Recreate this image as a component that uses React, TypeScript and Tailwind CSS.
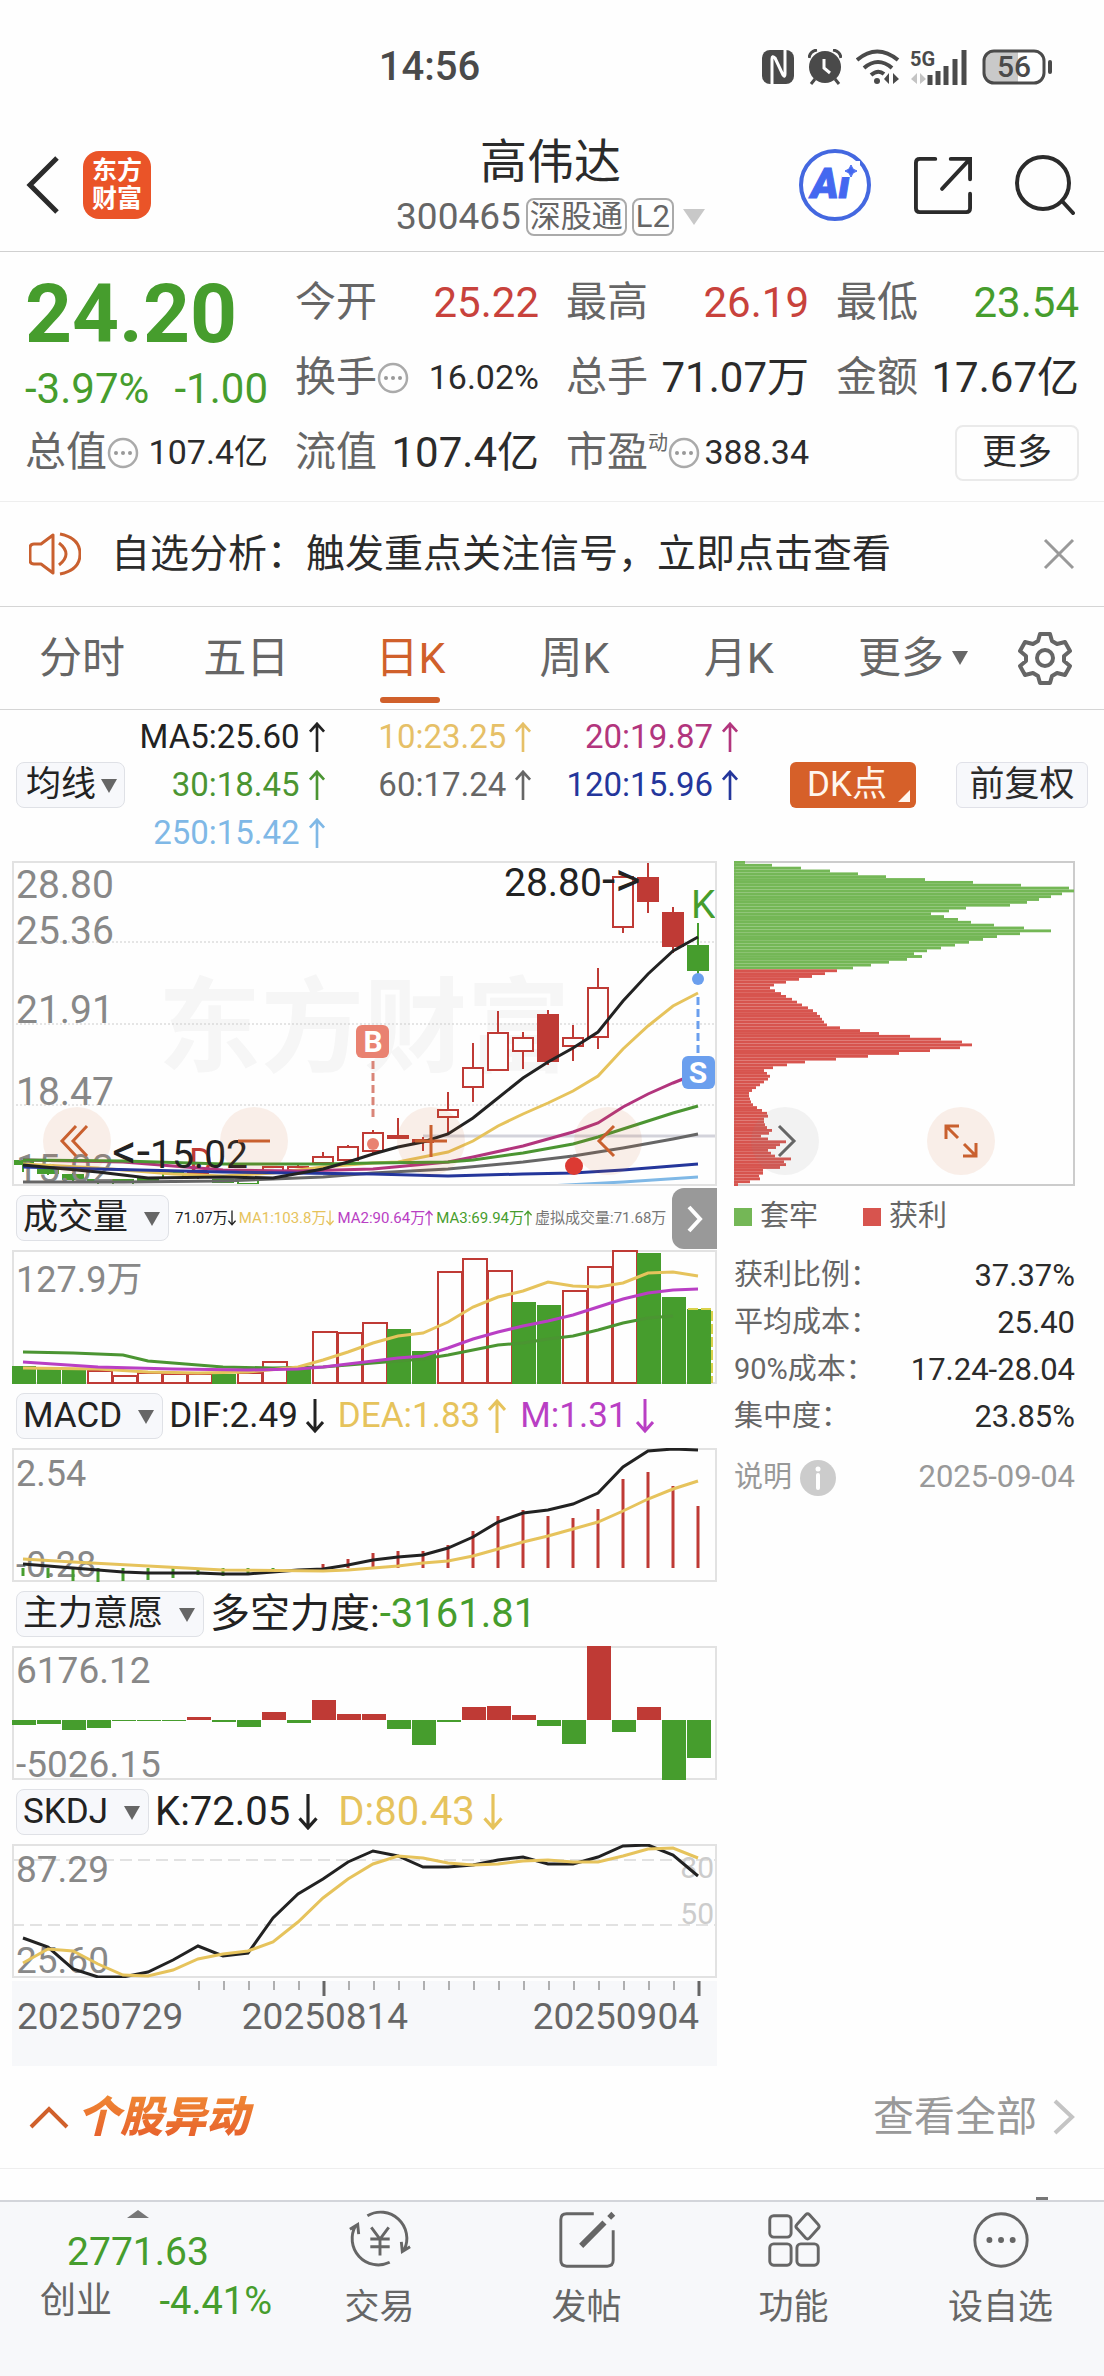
import { useState } from 'react';
import type { ReactNode } from 'react';

const RED = '#bf3a35';
const GREEN = '#469d2d';
const YELLOW = '#e6c35c';
const MAGENTA = '#b93fc4';

type Candle = {
  kind: 'hollow' | 'red' | 'green' | 'greenHollow';
  body: [number, number];
  wick: [number, number];
};

// Daily candles, oldest first, in chart units
const candles: Candle[] = [
  { kind: 'green', body: [300, 303], wick: [300, 311] },
  { kind: 'green', body: [307, 312], wick: [304, 314] },
  { kind: 'green', body: [314, 318], wick: [312, 320] },
  { kind: 'green', body: [319, 321], wick: [318, 326] },
  { kind: 'greenHollow', body: [319, 324], wick: [318, 324] },
  { kind: 'green', body: [317, 319], wick: [316, 320] },
  { kind: 'greenHollow', body: [312, 317], wick: [311, 317] },
  { kind: 'hollow', body: [312, 316], wick: [310, 318] },
  { kind: 'green', body: [319, 321], wick: [318, 321] },
  { kind: 'greenHollow', body: [319, 323], wick: [318, 323] },
  { kind: 'hollow', body: [306, 310], wick: [305, 310] },
  { kind: 'hollow', body: [306, 309], wick: [304, 312] },
  { kind: 'hollow', body: [296, 302], wick: [291, 302] },
  { kind: 'hollow', body: [286, 299], wick: [284, 299] },
  { kind: 'hollow', body: [272, 290], wick: [269, 293] },
  { kind: 'red', body: [275, 277], wick: [257, 276] },
  { kind: 'red', body: [279, 281], wick: [276, 290] },
  { kind: 'hollow', body: [249, 256], wick: [231, 272] },
  { kind: 'hollow', body: [207, 226], wick: [182, 241] },
  { kind: 'hollow', body: [172, 209], wick: [150, 209] },
  { kind: 'hollow', body: [177, 190], wick: [171, 208] },
  { kind: 'red', body: [154, 200], wick: [149, 204] },
  { kind: 'hollow', body: [177, 185], wick: [164, 200] },
  { kind: 'hollow', body: [127, 176], wick: [107, 188] },
  { kind: 'hollow', body: [16, 66], wick: [16, 72] },
  { kind: 'red', body: [17, 40], wick: [0, 52] },
  { kind: 'red', body: [52, 85], wick: [46, 92] },
  { kind: 'green', body: [85, 109], wick: [62, 117] },
];

// Each line is a list of [day index, y]
type Line = { color: string; points: [number, number][] };

const priceLines: Line[] = [
  { color: '#7fb8e6', points: [[18, 326], [21, 325], [24, 321], [27, 316]] },
  { color: '#666666', points: [[0, 321], [4, 321], [8, 320], [12, 316], [14, 312], [17, 308], [20, 301], [22, 295], [24, 287], [26, 278], [27, 273]] },
  { color: YELLOW, points: [[0, 303], [3, 307], [6, 313], [8, 315], [10, 312], [12, 306], [14, 302], [15, 301], [16, 296], [17, 291], [18, 280], [19, 265], [20, 253], [21, 242], [22, 230], [23, 215], [24, 188], [25, 165], [26, 145], [27, 132]] },
  { color: '#b2357d', points: [[0, 299], [4, 301], [6, 305], [8, 309], [11, 310], [14, 308], [17, 301], [18, 296], [20, 285], [22, 271], [23, 262], [24, 246], [25, 233], [26, 222], [27, 212]] },
  { color: '#4b9532', points: [[0, 299], [4, 300], [8, 303], [12, 303], [14, 302], [17, 301], [18, 299], [20, 292], [22, 283], [23, 276], [24, 268], [25, 260], [26, 252], [27, 245]] },
  { color: '#24369b', points: [[0, 306], [3, 308], [8, 311], [14, 313], [17, 315], [20, 313], [22, 312], [24, 309], [26, 305], [27, 303]] },
  { color: '#222222', points: [[0, 304], [3, 311], [5, 317], [8, 316], [10, 317], [12, 308], [13, 301], [14, 293], [15, 286], [16, 281], [17, 273], [18, 257], [19, 237], [20, 217], [21, 201], [22, 187], [23, 171], [24, 140], [25, 113], [26, 90], [27, 76]] },
];

const volumeTops = [116, 118, 119, 121, 126, 123, 124, 124, 124, 123, 112, 116, 82, 83, 73, 79, 101, 22, 9, 21, 52, 55, 41, 17, 1, 3, 47, 59];
const volumeDown = [0, 1, 2, 8, 11, 15, 16, 20, 21, 25, 26, 27];

const volumeLines: Line[] = [
  { color: '#4b9532', points: [[0, 102], [2, 103], [4, 105], [5, 111], [6, 113], [8, 117], [10, 118], [12, 117], [14, 113], [16, 109], [17, 105], [18, 100], [19, 95], [20, 93], [21, 89], [22, 86], [23, 80], [24, 73], [25, 68], [26, 66]] },
  { color: YELLOW, points: [[0, 118], [3, 119], [5, 122], [7, 123], [9, 122], [11, 117], [12, 110], [13, 102], [14, 93], [15, 86], [16, 83], [17, 72], [18, 57], [19, 47], [20, 41], [21, 32], [22, 36], [23, 37], [24, 33], [25, 23], [26, 22], [27, 26]] },
  { color: MAGENTA, points: [[0, 112], [3, 117], [6, 119], [9, 120], [11, 119], [12, 117], [13, 114], [14, 111], [15, 108], [16, 106], [17, 98], [18, 89], [19, 82], [20, 76], [21, 71], [22, 65], [23, 57], [24, 49], [25, 43], [26, 40], [27, 39]] },
];

const macdBars = [128, 130, 133, 134, 133, 132, 130, 127, 128, 125, 121, 120, 116, 111, 105, 103, 103, 97, 83, 68, 62, 68, 70, 61, 31, 24, 38, 58];

const macdLines: Line[] = [
  { color: '#222222', points: [[0, 116], [1, 118], [2, 120], [3, 122], [4, 124], [5, 125], [7, 125], [8, 126], [9, 126], [10, 124], [11, 122], [12, 121], [13, 117], [14, 112], [15, 109], [16, 107], [17, 100], [18, 89], [19, 74], [20, 65], [21, 62], [22, 56], [23, 45], [24, 19], [25, 3], [26, 1], [27, 2]] },
  { color: YELLOW, points: [[0, 111], [2, 114], [5, 118], [8, 122], [12, 123], [13, 122], [14, 120], [15, 118], [16, 115], [17, 113], [18, 108], [19, 101], [20, 94], [21, 88], [22, 81], [23, 74], [24, 63], [25, 51], [26, 41], [27, 33]] },
];

const forceBars = [79, 78, 84, 82, 75, 75, 75, 71, 76, 81, 66, 77, 54, 68, 68, 83, 99, 76, 61, 60, 69, 80, 98, 0, 86, 61, 134, 112];

const skdjLines: Line[] = [
  { color: '#222222', points: [[0, 94], [1, 103], [2, 125], [3, 133], [4, 133], [5, 128], [6, 116], [7, 102], [8, 112], [9, 109], [10, 74], [11, 50], [12, 35], [13, 18], [14, 7], [15, 12], [16, 23], [17, 23], [18, 21], [19, 16], [20, 13], [21, 20], [22, 20], [23, 13], [24, 2], [25, 1], [26, 11], [27, 32]] },
  { color: YELLOW, points: [[0, 119], [1, 105], [2, 107], [3, 120], [4, 131], [5, 132], [6, 126], [7, 115], [8, 110], [9, 107], [10, 98], [11, 78], [12, 54], [13, 35], [14, 20], [15, 12], [16, 14], [17, 19], [18, 21], [19, 20], [20, 17], [21, 16], [22, 18], [23, 18], [24, 12], [25, 5], [26, 4], [27, 14]] },
];

// Chip distribution, top price first
const trappedChips = [11, 38, 67, 96, 124, 152, 191, 239, 287, 335, 340, 328, 317, 305, 293, 276, 232, 215, 197, 210, 224, 237, 260, 290, 317, 286, 263, 249, 235, 221, 207, 193, 180, 188, 173, 155, 137, 119];
const profitChips = [103, 91, 78, 65, 52, 40, 36, 41, 47, 52, 58, 63, 68, 74, 79, 83, 86, 88, 90, 93, 106, 126, 145, 176, 207, 228, 238, 226, 196, 165, 134, 102, 71, 53, 39, 30, 33, 36, 34, 30, 26, 22, 18, 15, 15, 16, 17, 19, 23, 28, 33, 34, 30, 30, 31, 33, 38, 35, 27, 34, 52, 46, 42, 34, 37, 41, 57, 50, 52, 46, 29, 29, 25, 26, 16, 4];
const chips = [...trappedChips, ...profitChips];

const averages = [
  { text: 'MA5:25.60', color: 'text-[#222222]' },
  { text: '10:23.25', color: 'text-[#e6c067]' },
  { text: '20:19.87', color: 'text-[#b2357d]' },
  { text: '30:18.45', color: 'text-[#4b9532]' },
  { text: '60:17.24', color: 'text-[#666666]' },
  { text: '120:15.96', color: 'text-[#24369b]' },
  { text: '250:15.42', color: 'text-[#7fb8e6]' },
];

const costs = [
  { label: '获利比例：', value: '37.37%' },
  { label: '平均成本：', value: '25.40' },
  { label: '90%成本：', value: '17.24-28.04' },
  { label: '集中度：', value: '23.85%' },
];

const tabs = ['分时', '五日', '日K', '周K', '月K', '更多'];
const indicators = ['成交量', 'MACD', '主力意愿', 'SKDJ'];

const dayX = (i: number) => 11 + 25 * i;

export default function App() {
  const [activeTab, setActiveTab] = useState('日K');
  const [showNotice, setShowNotice] = useState(true);

  return (
    <div className="min-h-screen bg-[#fefefe] text-[#2b2b2b] font-['Roboto','Noto_Sans_CJK_SC',sans-serif]">
      <StatusBar />
      <Header />
      <Quotes />

      {/* Notice */}
      {showNotice && (
        <div className="flex h-[105px] items-center border-b border-[#d5d5d5] px-[29px]">
          <svg className="h-11 w-[52px] shrink-0" viewBox="0 0 52 44" fill="none" stroke="#c9602f" strokeWidth="3">
            <path d="M24 3v38L12 32H5q-4 0-4-4V16q0-4 4-4h7z" strokeLinejoin="round" />
            <path d="M30 11q14 11 0 22M31 2q20 4 20 20t-20 20" />
          </svg>
          <p className="ml-[30px] flex-1 text-[39px] leading-[52px]">自选分析：触发重点关注信号，立即点击查看</p>
          <button aria-label="关闭" onClick={() => setShowNotice(false)}>
            <svg className="size-8" viewBox="0 0 32 32" stroke="#999" strokeWidth="3">
              <path d="M2 2l28 28M30 2L2 30" />
            </svg>
          </button>
        </div>
      )}

      {/* Period tabs */}
      <div className="flex h-[103px] items-center border-b border-[#d5d5d5]">
        <div className="grid h-full flex-1 grid-cols-6">
          {tabs.map((tab) => (
            <button
              key={tab}
              onClick={() => setActiveTab(tab)}
              className={`relative flex h-full items-center justify-center gap-2 text-[43px] ${
                tab === activeTab ? 'text-[#d0602b]' : 'text-[#666]'
              } ${tab === '更多' ? 'pl-5' : ''}`}
            >
              {tab}
              {tab === '更多' && <Caret className="size-4" />}
              {tab === activeTab && <span className="absolute bottom-[6px] h-[6px] w-[60px] rounded-full bg-[#d0602b]" />}
            </button>
          ))}
        </div>
        <button aria-label="设置" className="flex w-[119px] justify-center">
          <svg className="size-[54px]" viewBox="0 0 54 54" fill="none" stroke="#666" strokeWidth="4">
            <path d="M22 3h10l2 7 5 3 8-2 5 9-6 5v5l6 5-5 9-8-2-5 3-2 7H22l-2-7-5-3-8 2-5-9 6-5v-5l-6-5 5-9 8 2 5-3z" strokeLinejoin="round" />
            <circle cx="27" cy="27" r="8" />
          </svg>
        </button>
      </div>

      {/* Moving averages */}
      <div className="flex items-center px-4 pt-[3px] pb-1">
        <Picker label="均线设置" options={['均线', 'BOLL']} tight />
        <div className="grid flex-1 grid-cols-[201fr_207fr_207fr]">
          {averages.map((avg) => (
            <span key={avg.text} className={`flex items-center justify-end gap-2 text-[33px] leading-[48px] ${avg.color}`}>
              {avg.text}
              <Arrow className="h-[30px] w-[18px]" />
            </span>
          ))}
        </div>
        <button className="relative ml-[51px] h-[46px] w-[126px] rounded-md bg-[#d66029] pr-3 text-[35px] leading-[44px] text-[#fff6ee]">
          DK点
          <svg className="absolute right-[6px] bottom-[6px] size-3" viewBox="0 0 12 12" fill="#fff6ee">
            <path d="M12 0v12H0z" />
          </svg>
        </button>
        <button className="ml-10 h-[46px] w-[132px] rounded-md border border-[#e0e1e8] bg-[#f7f8fb] text-[35px] leading-[42px]">
          前复权
        </button>
      </div>

      {/* Charts */}
      <div className="grid grid-cols-[705fr_341fr] gap-[17px] pr-[29px] pl-3">
        <div>
          <PriceChart />
          <VolumeChart />
          <MacdChart />
          <ForceChart />
          <SkdjChart />
          <DateAxis />
        </div>
        <ChipPanel />
      </div>

      {/* Stock moves */}
      <div className="flex h-[103px] items-center border-b border-[#eee] px-[29px]">
        <svg className="h-6 w-10" viewBox="0 0 40 24" fill="none" stroke="#d0602b" strokeWidth="4">
          <path d="M2 22L20 4l18 18" />
        </svg>
        <h2 className="ml-2 bg-gradient-to-b from-[#f08c35] to-[#e55a2b] bg-clip-text pr-2 text-[43px] leading-[56px] font-black text-transparent italic">
          个股异动
        </h2>
        <a href="#moves" className="ml-auto flex items-center gap-4 text-[41px] leading-[56px] text-[#999]">
          查看全部
          <svg className="h-9 w-[22px]" viewBox="0 0 22 36" fill="none" stroke="#c4c4c4" strokeWidth="4">
            <path d="M2 2l17 16L2 34" />
          </svg>
        </a>
      </div>
      <div className="flex h-[31px] items-end justify-end pr-14">
        <span className="h-[3px] w-3 bg-[#777]" />
      </div>

      <BottomBar />
    </div>
  );
}

function StatusBar() {
  return (
    <div className="relative flex h-[128px] items-center justify-end pt-[6px] pr-[50px] text-[#4a4a4a]">
      <span className="absolute left-[34.3%] text-[40px] leading-[48px] font-medium">14:56</span>
      <div className="flex items-center gap-[14px]">
        {/* NFC */}
        <svg className="h-[34px] w-8" viewBox="0 0 32 34">
          <rect width="32" height="34" rx="8" fill="#4a4a4a" />
          <path d="M10 34V9q0-4 3-1l8 17q2 3 2-1V0" fill="none" stroke="#fefefe" strokeWidth="3" />
        </svg>
        {/* Alarm */}
        <svg className="h-9 w-[34px]" viewBox="0 0 34 36" fill="none" stroke="#4a4a4a" strokeWidth="3">
          <circle cx="17" cy="18" r="16" fill="#4a4a4a" stroke="none" />
          <path d="M1 9q1-7 8-8M33 9q-1-7-8-8M7 30l-4 5M27 30l4 5" />
          <path d="M16 10v9l6 5" stroke="#fefefe" />
        </svg>
        {/* Wifi */}
        <svg className="h-9 w-11" viewBox="0 0 44 36" fill="none" stroke="#4a4a4a" strokeWidth="4">
          <path d="M1 11q20-17 41 0M8 19q14-12 28 0M15 26q7-6 13-1" />
          <circle cx="21" cy="32" r="3" fill="#4a4a4a" stroke="none" />
          <path d="M33 24v11l-5-5zM37 35V24l6 6z" fill="#4a4a4a" stroke="none" />
        </svg>
        {/* Signal */}
        <svg className="-ml-1 h-9 w-[58px] overflow-visible" viewBox="0 0 58 36">
          <text x="0" y="17" fontSize="20" fontWeight="700" fill="#4a4a4a">5G</text>
          <path d="M7 24v11l-6-5zM10 35V24l6 6z" fill="#c4c4c4" />
          <path d="M20 36V26M28 36V22M36 36V17M45 36V10M54 36V1" stroke="#4a4a4a" strokeWidth="5" />
        </svg>
        {/* Battery */}
        <svg className="h-9 w-[72px]" viewBox="0 0 72 36">
          <rect x="2" y="2" width="60" height="32" rx="10" fill="#fefefe" />
          <path d="M12 2h24v32H12Q2 34 2 24V12Q2 2 12 2z" fill="#c9c9c9" />
          <rect x="2" y="2" width="60" height="32" rx="10" fill="none" stroke="#4a4a4a" strokeWidth="3" />
          <path d="M68 13v10" stroke="#4a4a4a" strokeWidth="4" strokeLinecap="round" />
          <text x="32" y="28" fontSize="30" fontWeight="500" textAnchor="middle" fill="#4a4a4a">56</text>
        </svg>
      </div>
    </div>
  );
}

function Header() {
  return (
    <header className="grid h-[124px] grid-cols-[1fr_auto_1fr] items-center border-b border-[#d0d0d0] pr-[29px] pb-[9px] pl-[26px]">
      <div className="flex items-center gap-6">
        <button aria-label="返回">
          <svg className="h-[58px] w-[33px]" viewBox="0 0 33 58" fill="none" stroke="#2b2b2b" strokeWidth="5">
            <path d="M31 2L4 29l27 27" />
          </svg>
        </button>
        <a href="#home" className="flex size-[68px] flex-col items-center justify-center rounded-2xl bg-[#ea5428] text-[25px] leading-[28px] font-bold text-white">
          <span>东方</span>
          <span>财富</span>
        </a>
      </div>
      <div className="pt-1 text-center">
        <h1 className="text-[47px] leading-[60px] font-normal">高伟达</h1>
        <div className="flex h-[50px] items-center gap-[5px] text-[#666]">
          <span className="text-[37px]">300465</span>
          <span className="flex h-[38px] items-center rounded-lg border-2 border-[#aaa] px-[2px] text-[31px]">深股通</span>
          <span className="flex h-[38px] items-center rounded-lg border-2 border-[#aaa] px-[2px] text-[31px]">L2</span>
          <svg className="ml-1 h-4 w-[22px]" viewBox="0 0 22 16" fill="#c8c8c8">
            <path d="M0 0h22L11 16z" />
          </svg>
        </div>
      </div>
      <div className="flex items-center justify-end gap-[43px]">
        <button aria-label="Ai">
          <svg className="size-[72px]" viewBox="0 0 72 72">
            <circle cx="36" cy="36" r="34" fill="#fff" stroke="#4468e0" strokeWidth="4" />
            <text x="12" y="49" fontSize="42" fontWeight="900" fontStyle="italic" fill="#4468f0" stroke="#4468f0">Ai</text>
            <path d="M43 12h18v16H43z" fill="#fff" />
            <path d="M52 16q1 5 6 6-5 1-6 6-1-5-6-6 5-1 6-6z" fill="#4468f0" stroke="#4468f0" />
          </svg>
        </button>
        <button aria-label="分享">
          <svg className="size-[58px]" viewBox="0 0 60 60" fill="none" stroke="#2b2b2b" strokeWidth="4" strokeLinecap="round">
            <path d="M22 3H6q-4 0-4 4v47q0 4 4 4h48q4 0 4-4V39M38 3h20v21M57 4L29 34" />
          </svg>
        </button>
        <button aria-label="搜索">
          <svg className="size-[60px]" viewBox="0 0 60 60" fill="none" stroke="#2b2b2b" strokeWidth="4" strokeLinecap="round">
            <circle cx="28" cy="28" r="26" />
            <path d="M47 46l11 12" />
          </svg>
        </button>
      </div>
    </header>
  );
}

function Quotes() {
  return (
    <section className="grid grid-cols-[243fr_244fr_243fr_243fr] gap-x-[27px] border-b border-[#eee] px-[25px] pt-[13px] pb-[11px]">
      <div className="row-span-2 text-[#469d2d]">
        <div className="text-[82px] leading-[98px] font-bold">24.20</div>
        <div className="flex justify-between text-[42px] leading-[52px]">
          <span>-3.97%</span>
          <span>-1.00</span>
        </div>
      </div>
      <Quote label="今开" value="25.22" color="text-[#c8423c]" />
      <Quote label="最高" value="26.19" color="text-[#c8423c]" />
      <Quote label="最低" value="23.54" color="text-[#469d2d]" />
      <Quote label="换手" value="16.02%" more />
      <Quote label="总手" value="71.07万" />
      <Quote label="金额" value="17.67亿" />
      <Quote label="总值" value="107.4亿" more />
      <Quote label="流值" value="107.4亿" />
      <Quote label="市盈" sup="动" value="388.34" more />
      <div className="flex h-[75px] items-center justify-end">
        <button className="h-14 w-[124px] rounded-lg border-2 border-[#eaeaea] text-[35px] leading-[50px]">更多</button>
      </div>
    </section>
  );
}

function Quote({ label, value, color = 'text-[#2b2b2b]', more = false, sup }: { label: string; value: string; color?: string; more?: boolean; sup?: string }) {
  return (
    <div className="flex h-[75px] items-center justify-between whitespace-nowrap">
      <span className="flex items-center text-[41px] text-[#666]">
        {label}
        {sup && <sup className="text-[20px]">{sup}</sup>}
        {more && (
          <svg className="size-8" viewBox="0 0 32 32" fill="#999">
            <circle cx="16" cy="16" r="14" fill="none" stroke="#aaa" strokeWidth="2.5" />
            <circle cx="9" cy="16" r="2" />
            <circle cx="16" cy="16" r="2" />
            <circle cx="23" cy="16" r="2" />
          </svg>
        )}
      </span>
      <span className={`${more ? 'text-[34px]' : 'text-[42px]'} ${color}`}>{value}</span>
    </div>
  );
}

function Caret({ className }: { className: string }) {
  return (
    <svg className={className} viewBox="0 0 16 16" fill="#666">
      <path d="M0 1h16L8 15z" />
    </svg>
  );
}

function Arrow({ className, down = false }: { className: string; down?: boolean }) {
  return (
    <svg className={className} viewBox="0 0 18 34" fill="none" stroke="currentColor" strokeWidth="3">
      {down ? <path d="M9 0v32M1 23l8 9 8-9" /> : <path d="M9 34V2M1 11l8-9 8 9" />}
    </svg>
  );
}

function Picker({ label, options, tight = false }: { label: string; options: string[]; tight?: boolean }) {
  return (
    <div className="relative shrink-0">
      <select
        aria-label={label}
        defaultValue={options[0]}
        className={`block h-[46px] appearance-none rounded-lg border border-[#dfe1e6] bg-[#f7f8fb] text-[35px] leading-[42px] text-[#222] [field-sizing:content] ${
          tight ? 'pr-7 pl-[9px]' : 'pr-10 pl-[6px]'
        }`}
      >
        {options.map((option) => (
          <option key={option}>{option}</option>
        ))}
      </select>
      <Caret className={`pointer-events-none absolute top-4 size-4 ${tight ? 'right-2' : 'right-[9px]'}`} />
    </div>
  );
}

function IndicatorRow({ name, children }: { name: string; children: ReactNode }) {
  return (
    <div className="flex h-16 items-center gap-[6px] pl-1 whitespace-nowrap">
      <Picker label="指标" options={[name, ...indicators.filter((item) => item !== name)]} />
      {children}
    </div>
  );
}

function Lines({ lines }: { lines: Line[] }) {
  return (
    <>
      {lines.map((line) => (
        <polyline
          key={line.color}
          points={line.points.map(([i, y]) => `${dayX(i)},${y}`).join(' ')}
          fill="none"
          stroke={line.color}
          strokeWidth="3"
        />
      ))}
    </>
  );
}

function RoundButton({ label, gray = false, children }: { label: string; gray?: boolean; children: ReactNode }) {
  return (
    <button
      aria-label={label}
      className={`flex size-[68px] items-center justify-center rounded-full ${gray ? 'bg-[#888]/10' : 'bg-[#d0602b]/10'}`}
    >
      <svg className="size-9" viewBox="0 0 36 36" fill="none" stroke={gray ? '#666' : '#c9602f'} strokeWidth="3">
        {children}
      </svg>
    </button>
  );
}

function PriceChart() {
  return (
    <div className="relative">
      <svg className="block w-full" viewBox="0 0 705 325">
        <text x="146" y="203" fontSize="103" fontWeight="700" fill="#f6f6f6">东方财富</text>
        <path d="M0 81h705M0 163h705M0 244h705" stroke="#ccc" strokeDasharray="2 2" />
        <path d="M411 275h294" stroke="#d3d3db" strokeWidth="3" />
        {candles.map((candle, i) => {
          const hollow = candle.kind === 'hollow' || candle.kind === 'greenHollow';
          const color = candle.kind === 'hollow' || candle.kind === 'red' ? RED : GREEN;
          const [top, bottom] = candle.body;
          return (
            <g key={i} stroke={color} strokeWidth="2">
              <path d={`M${dayX(i)} ${candle.wick[0]}V${candle.wick[1]}`} />
              <rect x={dayX(i) - 10} y={top} width="20" height={bottom - top} fill={hollow ? '#fefefe' : color} />
            </g>
          );
        })}
        <text x="177" y="313" fontSize="36" fill={RED}>D</text>
        <g fontSize="39" fill="#888">
          <text x="4" y="37">28.80</text>
          <text x="4" y="83">25.36</text>
          <text x="4" y="162">21.91</text>
          <text x="4" y="244">18.47</text>
          <text x="4" y="321">15.02</text>
        </g>
        <Lines lines={priceLines} />
        <text x="236" y="307" fontSize="39" textAnchor="end" fill="#222">
          <tspan fontSize="48">&lt;-</tspan>15.02
        </text>
        <text x="492" y="35" fontSize="39" fill="#222">
          28.80<tspan fontSize="48">-&gt;</tspan>
        </text>
        <text x="679" y="57" fontSize="39" fill={GREEN}>K</text>

        {/* Buy and sell marks */}
        <path d="M361 200v58" stroke="#d98578" strokeWidth="3" strokeDasharray="8 4" />
        <rect x="344" y="164" width="33" height="33" rx="6" fill="#e98271" />
        <text x="361" y="191" fontSize="30" fontWeight="700" textAnchor="middle" fill="#fff">B</text>
        <circle cx="361" cy="283" r="6" fill="#e98271" />
        <path d="M686 136v58" stroke="#6b9fee" strokeWidth="3" strokeDasharray="8 4" />
        <rect x="670" y="195" width="33" height="33" rx="6" fill="#6b9fee" />
        <text x="686" y="222" fontSize="30" fontWeight="700" textAnchor="middle" fill="#fff">S</text>
        <circle cx="686" cy="118" r="6" fill="#6b9fee" />
        <circle cx="562" cy="305" r="9" fill="#dc3a33" />
        <rect x="1" y="1" width="703" height="323" fill="none" stroke="#e2e2e2" strokeWidth="2" />
      </svg>
      <div className="absolute inset-x-0 bottom-[11px] flex gap-[109px] pl-[31px]">
        <RoundButton label="快退"><path d="M17 3L3 18l14 15M28 3L14 18l14 15" /></RoundButton>
        <RoundButton label="缩小"><path d="M2 18h32" /></RoundButton>
        <RoundButton label="放大"><path d="M2 18h32M18 2v32" /></RoundButton>
        <RoundButton label="左移"><path d="M24 3L9 18l15 15" /></RoundButton>
      </div>
    </div>
  );
}

function VolumeChart() {
  return (
    <>
      <div className="relative">
        <IndicatorRow name="成交量">
          <div className="flex gap-[3px] text-[15px]">
            <span className="flex items-center text-[#222]">71.07万<Arrow down className="h-5 w-2" /></span>
            <span className="flex items-center text-[#e6c35c]">MA1:103.8万<Arrow down className="h-5 w-2" /></span>
            <span className="flex items-center text-[#b93fc4]">MA2:90.64万<Arrow className="h-5 w-2" /></span>
            <span className="flex items-center text-[#469d2d]">MA3:69.94万<Arrow className="h-5 w-2" /></span>
            <span className="text-[#777]">虚拟成交量:71.68万</span>
          </div>
        </IndicatorRow>
        <button aria-label="展开" className="absolute top-[2px] right-0 flex h-[61px] w-[45px] items-center justify-center rounded-l-xl bg-[#999]">
          <svg className="h-7 w-4" viewBox="0 0 16 28" fill="none" stroke="#fff" strokeWidth="4">
            <path d="M2 2l11 12L2 26" />
          </svg>
        </button>
      </div>
      <svg className="block w-full" viewBox="0 0 705 134">
        <rect x="1" y="1" width="703" height="132" fill="none" stroke="#e2e2e2" strokeWidth="2" />
        {volumeTops.map((top, i) =>
          volumeDown.includes(i) ? (
            <rect key={i} x={dayX(i) - 11} y={top} width="24" height={134 - top} fill={GREEN} />
          ) : (
            <rect key={i} x={dayX(i) - 10} y={top} width="24" height={133 - top} fill="#fefefe" stroke={RED} strokeWidth="2" />
          ),
        )}
        <path d="M676 59h24v74" fill="none" stroke="#d9d24a" strokeWidth="2" strokeDasharray="10 3" />
        <text x="4" y="42" fontSize="36" fill="#888">127.9万</text>
        <Lines lines={volumeLines} />
      </svg>
    </>
  );
}

function MacdChart() {
  return (
    <>
      <IndicatorRow name="MACD">
        <div className="flex gap-[14px] text-[35px]">
          <span className="flex items-center gap-2 text-[#222]">DIF:2.49<Arrow down className="h-9 w-[18px]" /></span>
          <span className="flex items-center gap-2 text-[#e6c35c]">DEA:1.83<Arrow className="h-9 w-[18px]" /></span>
          <span className="flex items-center gap-2 text-[#b93fc4]">M:1.31<Arrow down className="h-9 w-[18px]" /></span>
        </div>
      </IndicatorRow>
      <svg className="block w-full" viewBox="0 0 705 134">
        <rect x="1" y="1" width="703" height="132" fill="none" stroke="#e2e2e2" strokeWidth="2" />
        <g fontSize="36" fill="#888">
          <text x="4" y="38">2.54</text>
          <text x="4" y="129">-0.28</text>
        </g>
        {macdBars.map((end, i) => (
          <path key={i} d={`M${dayX(i)} 120V${end}`} stroke={end > 120 ? GREEN : RED} strokeWidth="3" />
        ))}
        <Lines lines={macdLines} />
      </svg>
    </>
  );
}

function ForceChart() {
  return (
    <>
      <IndicatorRow name="主力意愿">
        <div className="text-[40px]">
          <span className="text-[#222]">多空力度:</span>
          <span className="text-[#469d2d]">-3161.81</span>
        </div>
      </IndicatorRow>
      <svg className="block w-full" viewBox="0 0 705 134">
        <rect x="1" y="1" width="703" height="132" fill="none" stroke="#e2e2e2" strokeWidth="2" />
        {forceBars.map((end, i) => (
          <rect
            key={i}
            x={dayX(i) - 11}
            y={Math.min(74, end)}
            width="24"
            height={Math.abs(end - 74)}
            fill={end > 74 ? GREEN : RED}
          />
        ))}
        <g fontSize="37" fill="#888">
          <text x="4" y="37">6176.12</text>
          <text x="4" y="131">-5026.15</text>
        </g>
      </svg>
    </>
  );
}

function SkdjChart() {
  return (
    <>
      <IndicatorRow name="SKDJ">
        <div className="flex gap-5 text-[40px]">
          <span className="flex items-center gap-2 text-[#222]">K:72.05<Arrow down className="h-9 w-[20px]" /></span>
          <span className="flex items-center gap-2 text-[#e6c35c]">D:80.43<Arrow down className="h-9 w-[20px]" /></span>
        </div>
      </IndicatorRow>
      <svg className="block w-full" viewBox="0 0 705 134">
        <rect x="1" y="1" width="703" height="132" fill="none" stroke="#e2e2e2" strokeWidth="2" />
        <path d="M0 16h705M0 81h705" stroke="#e2e2e2" strokeWidth="2" strokeDasharray="12 6" />
        <g fontSize="37" fill="#888">
          <text x="4" y="38">87.29</text>
          <text x="4" y="129">25.60</text>
        </g>
        <g fontSize="30" textAnchor="end" fill="#ccc">
          <text x="702" y="34">80</text>
          <text x="702" y="80">50</text>
        </g>
        <Lines lines={skdjLines} />
      </svg>
    </>
  );
}

function DateAxis() {
  const ticks = Array.from({ length: 21 }, (_, i) => i + 7);
  return (
    <div className="mt-[3px] h-[85px] bg-[#f7f8fa]">
      <svg className="block w-full" viewBox="0 0 705 16" stroke="#666">
        {ticks.map((i) => {
          const major = i === 12 || i === 27;
          return <path key={i} d={`M${dayX(i) + 1} 0v${major ? 15 : 9}`} strokeWidth={major ? 3 : 1} />;
        })}
      </svg>
      <div className="flex justify-between pr-[18px] pl-[5px] text-[37px] leading-[40px] text-[#666]">
        <span>20250729</span>
        <span className="mr-[66px]">20250814</span>
        <span>20250904</span>
      </div>
    </div>
  );
}

function ChipPanel() {
  const pitch = 325 / chips.length;
  return (
    <div>
      <div className="relative">
        <svg className="block w-full" viewBox="0 0 341 325">
          <rect x="1" y="1" width="339" height="323" fill="none" stroke="#ccc" strokeWidth="2" />
          {chips.map((width, i) => (
            <rect
              key={i}
              x="0"
              y={i * pitch}
              width={width}
              height={pitch}
              fill={i < trappedChips.length ? '#74b756' : '#d7544e'}
            />
          ))}
        </svg>
        <div className="absolute inset-x-0 bottom-[11px] flex gap-[108px] pl-[17px]">
          <RoundButton label="右移" gray><path d="M12 3l15 15-15 15" /></RoundButton>
          <RoundButton label="全屏"><path d="M3 16V3h13M3 3l12 12M33 20v13H20M33 33L21 21" /></RoundButton>
        </div>
      </div>
      <div className="flex h-[62px] items-center text-[29px] text-[#666]">
        <span className="mr-2 size-[18px] bg-[#74b756]" />
        套牢
        <span className="mr-2 ml-[45px] size-[18px] bg-[#d7544e]" />
        获利
      </div>
      <dl className="mt-1 text-[31px] leading-[47px]">
        {costs.map((cost) => (
          <div key={cost.label} className="flex justify-between whitespace-nowrap">
            <dt className="text-[29px] text-[#666]">{cost.label}</dt>
            <dd>{cost.value}</dd>
          </div>
        ))}
      </dl>
      <div className="mt-[14px] flex h-[47px] items-center text-[29px] text-[#999]">
        说明
        <button aria-label="说明" className="ml-2">
          <svg className="size-9" viewBox="0 0 36 36">
            <circle cx="18" cy="18" r="18" fill="#ccc" />
            <path d="M18 15v13" stroke="#fff" strokeWidth="4" strokeLinecap="round" />
            <circle cx="18" cy="9" r="2.5" fill="#fff" />
          </svg>
        </button>
        <span className="ml-auto text-[31px]">2025-09-04</span>
      </div>
    </div>
  );
}

function BottomBar() {
  return (
    <nav className="flex h-[176px] border-t-2 border-[#d3d5da] bg-[#f7f8fa] text-[#666]">
      <button className="flex w-1/4 flex-col items-center pt-2">
        <svg className="h-2 w-[22px]" viewBox="0 0 22 8" fill="#777">
          <path d="M0 8h22L11 0z" />
        </svg>
        <span className="mt-[10px] text-[39px] leading-[48px] text-[#469d2d]">2771.63</span>
        <span className="flex w-full items-center justify-between pr-1 pl-10 text-[36px] leading-[50px]">
          创业
          <span className="text-[38px] text-[#469d2d]">-4.41%</span>
        </span>
      </button>
      <NavButton label="交易">
        <path d="M20 7a27 27 0 0 1 38 35M43 55A27 27 0 0 1 8 17M2 21l8-5 1 10M64 39l-8 5-1-10" />
        <path d="M24 19l9 12 9-12M33 31v17M23 31h20M23 39h20" />
      </NavButton>
      <NavButton label="发帖">
        <path d="M40 5H12q-6 0-6 6v42q0 6 6 6h42q6 0 6-6V22" />
        <path d="M56 5l4 4M51 14L27 38" strokeWidth="6" />
      </NavButton>
      <NavButton label="功能">
        <rect x="8" y="7" width="22" height="22" rx="4" />
        <rect x="8" y="36" width="22" height="22" rx="4" />
        <rect x="36" y="36" width="22" height="22" rx="4" />
        <path d="M45 6q2-2 4 0l9 10q2 2 0 4l-9 10q-2 2-4 0l-9-10q-2-2 0-4z" />
      </NavButton>
      <NavButton label="设自选">
        <circle cx="33" cy="32" r="27" />
        <path d="M21 32h.1M33 32h.1M45 32h.1" strokeWidth="6" strokeLinecap="round" />
      </NavButton>
    </nav>
  );
}

function NavButton({ label, children }: { label: string; children: ReactNode }) {
  return (
    <button className="flex flex-1 flex-col items-center pt-[6px]">
      <svg className="size-16" viewBox="0 0 66 64" fill="none" stroke="#666" strokeWidth="3">
        {children}
      </svg>
      <span className="mt-3 text-[35px] leading-[48px]">{label}</span>
    </button>
  );
}
